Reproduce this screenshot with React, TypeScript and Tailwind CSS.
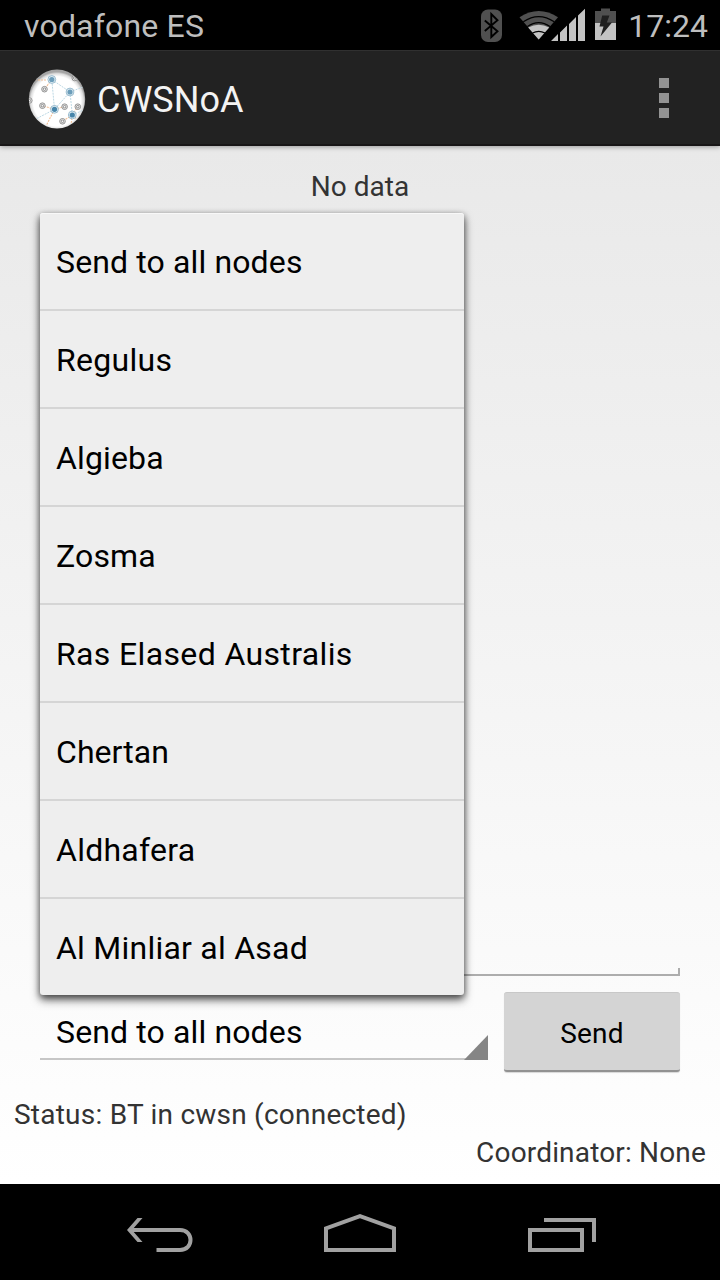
import React from "react";

const nodes = [
  { name: "Send to all nodes", tracking: "tracking-[0.13px]" },
  { name: "Regulus", tracking: "tracking-[0.3px]" },
  { name: "Algieba", tracking: "tracking-[0.15px]" },
  { name: "Zosma", tracking: "tracking-[0.15px]" },
  { name: "Ras Elased Australis", tracking: "tracking-[0.36px]" },
  { name: "Chertan", tracking: "tracking-[0.05px]" },
  { name: "Aldhafera", tracking: "tracking-[0.25px]" },
  { name: "Al Minliar al Asad", tracking: "tracking-[0.24px]" },
];

function StatusIcons() {
  return (
    <svg width="140" height="50" viewBox="480 0 140 50" aria-hidden="true">
      <rect x="481" y="9.5" width="21" height="32.5" rx="7" fill="#505050" />
      <path d="M484.800 20.500 L497.500 31.300 L491.300 37 V14 L497.500 20.300 L484.800 31" fill="none" stroke="#000" strokeWidth="1.9" />
      <path d="M538.7 39.5 L519.5 17.3 Q538.7 4.5 558 17.3 Z" fill="#505050" />
      <path d="M538.7 39.5 L528.2 27.5 Q538.7 21.8 549.2 27.5 Z" fill="#c3c3c3" />
      <path d="M523.3 21.800 Q538.7 11.300 554.200 21.800 M527.400 26.600 Q538.7 18.800 550 26.600" fill="none" stroke="#000" strokeWidth="1.2" />
      <path d="M532.500 33 Q538.7 29.600 545 33" fill="none" stroke="#000" strokeWidth="1.2" />
      <path d="M541 46 L574 13" stroke="#000" strokeWidth="4" />
      <path d="M551 41 L558 34 V41 Z M560 32.5 L567 25.5 V41 H560 Z M569 24 L576 17 V41 H569 Z M578 15.5 L585 8.8 V41 H578 Z" fill="#c3c3c3" />
      <path d="M601 8.500 H610 V11 H616 V23 H595 V11 H601 Z" fill="#505050" />
      <path d="M595 23 H616 V40 H595 Z" fill="#c3c3c3" />
      <path d="M602.200 15.5 H609.5 L606.8 22.5 H612 L600.5 36.5 L603.5 26.500 H599.5 Z" fill="#202020" />
    </svg>
  );
}

function AppLogo() {
  const hubs = [[51.8, 78.5], [70, 91], [54.5, 108.3], [72.3, 114]];
  const leaves = [[44.5, 88.2], [42.4, 104.7], [64.6, 105.7], [77.8, 105.7], [62.5, 120.3], [29.3, 99.5], [74.8, 77]];
  return (
    <svg className="relative top-px" width="58" height="60" viewBox="28 68 58 60" aria-hidden="true">
      <defs>
        <clipPath id="disc"><circle cx="57" cy="98.2" r="28" /></clipPath>
        <radialGradient id="rim" cx="50%" cy="54%" r="50%">
          <stop offset="0.84" stopColor="#fff" />
          <stop offset="0.94" stopColor="#ddd" />
          <stop offset="1" stopColor="#a5a5a5" />
        </radialGradient>
      </defs>
      <ellipse cx="57" cy="98" rx="28.2" ry="29.5" fill="url(#rim)" />
      <g clipPath="url(#disc)" fill="none">
        <path d="M51.8 78.5 L70 91 L54.5 108.3 L51.8 78.5 M70 91 L88 84 M70 91 L72.3 114 M54.5 108.3 L34 119 M72.3 114 L86 108" stroke="#bcd8e4" strokeWidth="1" strokeDasharray="2 1" />
        <path d="M35 79 H46 M51.8 78.5 L44.5 88.2 M54.5 108.3 L42.4 104.7 M54.5 108.3 L64.6 105.7 M54.5 108.3 L45 127 M72.3 114 L77.8 105.7 M72.3 114 L62.5 120.3 M72.3 114 L71 124 M72.3 114 L79 120" stroke="#f2bd93" strokeWidth="1.1" strokeDasharray="2 1" />
        {leaves.map(([x, y]) => (
          <g key={`${x}-${y}`}>
            <circle cx={x} cy={y} r="2.8" fill="#f5f5f5" stroke="#858585" strokeWidth="0.9" />
            <circle cx={x} cy={y} r="1.3" stroke="#757575" strokeWidth="0.8" />
          </g>
        ))}
        {hubs.map(([x, y], i) => (
          <g key={`${x}-${y}`}>
            <circle cx={x} cy={y} r="3.9" fill="#e3eff5" stroke="#86aec5" strokeWidth="0.8" />
            <circle cx={x} cy={y} r="2.6" fill={i < 2 ? "#6b9dba" : "#4785aa"} />
          </g>
        ))}
      </g>
    </svg>
  );
}

export default function App() {
  return (
    <div className="flex h-[1280px] w-[720px] flex-col overflow-hidden bg-black font-[Roboto,sans-serif]">
      <div className="flex h-[50px] shrink-0 items-center justify-between bg-black pl-6 pr-3 text-[32px] leading-[50px] text-[#bebebe]">
        <span className="pt-px tracking-[0.18px]">vodafone ES</span>
        <div className="flex items-center gap-[8px]">
          <StatusIcons />
          <span className="pt-px">17:24</span>
        </div>
      </div>

      <header className="z-10 flex h-24 shrink-0 items-center border-b-2 border-t border-b-[#181617] border-t-[#303030] bg-[#222] pl-7 pr-[51px] shadow-[0_1px_5px_rgba(0,0,0,0.35)]">
        <AppLogo />
        <h1 className="ml-[11px] flex-1 pt-[5px] text-[36px] font-normal leading-[44px] text-[#f3f3f3]">CWSNoA</h1>
        <div className="flex flex-col gap-[5px] pt-px">
          <span className="size-2.5 bg-[#939393]" />
          <span className="size-2.5 bg-[#939393]" />
          <span className="size-2.5 bg-[#939393]" />
        </div>
      </header>

      <main className="relative flex min-h-0 flex-1 flex-col bg-linear-to-b from-[#e9e9e9] to-white text-[28px] text-[#333]">
        <p className="pt-[25px] text-center leading-8">No data</p>
        <div className="flex-1" />
        <div className="mx-10 h-2 border-x-2 border-b-2 border-[#adadad]" />
        <div className="mx-10 mt-4 flex h-20 gap-4">
          <div className="relative h-[68px] w-[448px] border-b-2 border-[#c6c6c6] pl-4 pt-[20px] text-[32px] leading-[40px] tracking-[0.13px] text-black">
            Send to all nodes
            <svg className="absolute -bottom-[2px] right-0" width="24" height="25" aria-hidden="true">
              <path d="M24 0 V25 H0 Z" fill="#858585" />
            </svg>
          </div>
          <button className="flex h-20 flex-1 items-center justify-center rounded-[3px] border-b-2 border-t border-b-[#929292] border-t-[#c8c8c8] bg-[#d4d4d4] pt-[4px] text-[28px] tracking-[0.2px] text-black shadow-[0_1px_1px_rgba(0,0,0,0.15)]">
            Send
          </button>
        </div>
        <p className="mt-[27px] pl-3.5 leading-8 tracking-[0.23px]">Status: BT in cwsn (connected)</p>
        <p className="mb-[15px] mt-1.5 pr-3.5 text-right leading-8 tracking-[0.17px]">Coordinator: None</p>

        <ul className="absolute left-10 top-[67px] w-[424px] divide-y-2 divide-[#d5d5d5] rounded-[3px] bg-[#eee] text-[32px] text-black shadow-[0_5px_10px_rgba(0,0,0,0.55),0_2px_6px_rgba(0,0,0,0.45),inset_0_1px_0_#f8f8f8]">
          {nodes.map(({ name, tracking }) => (
            <li key={name} className="box-content flex h-24 items-center pl-4 leading-10">
              <span className={`pt-0.5 ${tracking}`}>{name}</span>
            </li>
          ))}
        </ul>
      </main>

      <nav className="h-24 shrink-0 bg-black">
        <svg width="720" height="96" viewBox="0 1184 720 96" fill="none" stroke="#a1a1a1" strokeWidth="4" aria-hidden="true">
          <path d="M131 1230 H180 C194 1230 194 1250 180 1250 H156.500" />
          <path d="M127 1230 L137.500 1218 H142.500 L132 1230 L142.500 1242 H137.500 Z" fill="#a1a1a1" stroke="none" />
          <path d="M326 1250 V1228.300 L360 1216.200 L394 1228.300 V1250 Z" />
          <path d="M530 1230 H582 V1250 H530 Z M544 1220 H594 V1242" />
        </svg>
      </nav>
    </div>
  );
}
